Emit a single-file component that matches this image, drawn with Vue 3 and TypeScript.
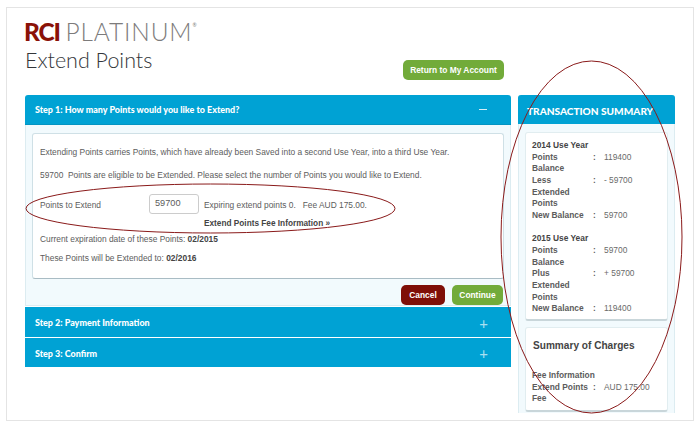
<script setup lang="ts">
interface Row {
  label: string
  value: string
}

const useYears: { title: string; rows: Row[] }[] = [
  {
    title: '2014 Use Year',
    rows: [
      { label: 'Points Balance', value: '119400' },
      { label: 'Less Extended Points', value: '- 59700' },
      { label: 'New Balance', value: '59700' }
    ]
  },
  {
    title: '2015 Use Year',
    rows: [
      { label: 'Points Balance', value: '59700' },
      { label: 'Plus Extended Points', value: '+ 59700' },
      { label: 'New Balance', value: '119400' }
    ]
  }
]
</script>

<template>
  <div class="page">
    <div class="frame">
      <div class="logo"><b>RCI</b><span>PLATINUM</span><sup>®</sup></div>
      <div class="top">
        <h1>Extend Points</h1>
        <a class="btn green back">Return to My Account</a>
      </div>

      <div class="columns">
        <div class="steps">
          <div class="step-head">
            <span>Step 1: How many Points would you like to Extend?</span>
            <i class="minus"></i>
          </div>
          <div class="step-body">
            <div class="card">
              <p class="intro">Extending Points carries Points, which have already been Saved into a second Use Year, into a third Use Year.</p>
              <p class="intro second">59700&nbsp; Points are eligible to be Extended. Please select the number of Points you would like to Extend.</p>
              <div class="extend-row">
                <span class="extend-label">Points to Extend</span>
                <div class="fake-input">59700</div>
                <span>Expiring extend points 0. &nbsp; Fee AUD 175.00.</span>
              </div>
              <a class="fee-link">Extend Points Fee Information »</a>
              <p class="date">Current expiration date of these Points: <b>02/2015</b></p>
              <p class="date next">These Points will be Extended to: <b>02/2016</b></p>
            </div>
            <div class="actions">
              <a class="btn red">Cancel</a>
              <a class="btn green">Continue</a>
            </div>
          </div>
          <div class="step-head closed">
            <span>Step 2: Payment Information</span>
            <em>+</em>
          </div>
          <div class="step-head closed last">
            <span>Step 3: Confirm</span>
            <em>+</em>
          </div>
        </div>

        <div class="side">
          <div class="side-head">TRANSACTION SUMMARY</div>
          <div class="side-body">
            <div class="side-card">
              <div v-for="year in useYears" :key="year.title" class="year">
                <div class="year-title">{{ year.title }}</div>
                <div v-for="row in year.rows" :key="row.label" class="row">
                  <span class="row-label">{{ row.label }}</span>
                  <span class="colon">:</span>
                  <span class="row-value">{{ row.value }}</span>
                </div>
              </div>
            </div>
            <div class="side-card charges">
              <h2>Summary of Charges</h2>
              <div class="year-title fee-title">Fee Information</div>
              <div class="row">
                <span class="row-label">Extend Points Fee</span>
                <span class="colon">:</span>
                <span class="row-value">AUD 175.00</span>
              </div>
            </div>
          </div>
        </div>
      </div>

      <svg class="marks" width="700" height="432" viewBox="0 0 700 432" fill="none">
        <ellipse cx="210.5" cy="208.5" rx="184.5" ry="24.5" />
        <ellipse cx="591.5" cy="237" rx="90.5" ry="176" />
      </svg>
    </div>
  </div>
</template>

<style>
html,
body {
  background: #fff;
}
</style>

<style scoped>
.page {
  width: 700px;
  height: 432px;
  padding: 7px 6px 11px;
  box-sizing: border-box;
  overflow: hidden;
  font-family: 'Liberation Sans', Arial, sans-serif;
  font-size: 8.4px;
  color: #5c5c5c;
}
.frame {
  height: 100%;
  box-sizing: border-box;
  border: 1px solid #e4e4e4;
  padding: 13px 18px 0;
}
.logo {
  height: 21px;
  display: flex;
  align-items: flex-start;
  margin-left: -1px;
  font-family: Lato, 'Liberation Sans', sans-serif;
  font-size: 24.5px;
  line-height: 21px;
  color: #7d7b7b;
}
.logo b {
  color: #8a1208;
  font-weight: 900;
  letter-spacing: -1.2px;
  margin-right: 6px;
}
.logo span {
  font-weight: 300;
  letter-spacing: 0.85px;
}
.logo sup {
  font-size: 5px;
  line-height: 9px;
}
.top {
  height: 53px;
  display: flex;
  justify-content: space-between;
  width: 479px;
}
h1 {
  margin: 5px 0 0;
  font-family: Lato, 'Liberation Sans', sans-serif;
  font-size: 21.5px;
  line-height: 26px;
  font-weight: 300;
  color: #33363a;
}
.btn {
  display: inline-flex;
  align-items: center;
  justify-content: center;
  height: 20px;
  border-radius: 5px;
  font-weight: 700;
  font-size: 8.4px;
  color: #fff;
}
.green {
  background: #72ab3a;
}
.red {
  background: #7f0f08;
  width: 44px;
}
.actions .green {
  width: 51px;
}
.back {
  margin-top: 18px;
  width: 101px;
}
.columns {
  display: grid;
  grid-template-columns: 486px 157px;
  gap: 7px;
  align-items: start;
}
.step-head {
  height: 29px;
  padding: 0 24px 0 10px;
  display: flex;
  align-items: center;
  justify-content: space-between;
  background: #00a2d4;
  border-radius: 3px 3px 0 0;
  border-bottom: 1px solid #0394c2;
  color: #fff;
  font-family: Lato, 'Liberation Sans', sans-serif;
  font-weight: 900;
  font-size: 8.95px;
}
.step-head.closed {
  height: 30px;
  padding-top: 1px;
  box-sizing: border-box;
  border-radius: 0;
  border-bottom: 0;
  margin-top: 1px;
}
.step-head.last {
  height: 29px;
}
.minus {
  width: 8px;
  height: 1px;
  background: #d5eef7;
}
.step-head em {
  font-style: normal;
  font-weight: 400;
  font-size: 15px;
  color: #a9dff1;
  margin-right: -1px;
}
.step-body {
  height: 181px;
  box-sizing: border-box;
  padding: 8px 6px 0;
  background: #f2fafd;
  border: 1px solid #dcecf1;
  border-width: 0 1px 1px;
}
.card {
  height: 146px;
  box-sizing: border-box;
  padding: 12px 7px 0;
  background: #fff;
  border: 1px solid #cfe0e6;
  border-bottom-color: #a9bcc4;
  border-radius: 3px;
}
p {
  margin: 0;
}
.intro {
  line-height: 12px;
}
.intro.second {
  margin-top: 11px;
}
.extend-row {
  margin-top: 12px;
  display: flex;
  align-items: center;
  height: 22px;
}
.extend-row > span {
  padding-top: 2px;
}
.extend-label {
  width: 109px;
}
.fake-input {
  width: 50px;
  height: 20px;
  box-sizing: border-box;
  padding: 0 5px;
  margin-right: 5px;
  border: 1px solid #ccc;
  border-radius: 3px;
  line-height: 17px;
  font-size: 9.2px;
}
.fee-link {
  display: block;
  margin: 3px 0 0 164px;
  font-weight: 700;
  font-size: 8.25px;
  line-height: 12px;
  color: #444;
}
.date {
  margin-top: 3px;
  line-height: 12px;
}
.date.next {
  margin-top: 7px;
}
.date b {
  color: #444;
}
.actions {
  margin: 6px 1px 0 0;
  display: flex;
  justify-content: flex-end;
  gap: 7px;
}
.side {
  height: 318px;
  background: #f2fafd;
  border: 1px solid #dcecf1;
  border-width: 0 1px;
  border-radius: 3px 3px 0 0;
}
.side-head {
  height: 29px;
  margin: 0 -1px;
  padding: 2px 0 0 9px;
  display: flex;
  align-items: center;
  background: #00a2d4;
  border-radius: 3px 3px 0 0;
  box-sizing: border-box;
  color: #fff;
  font-family: Lato, 'Liberation Sans', sans-serif;
  font-weight: 900;
  font-size: 10.1px;
}
.side-body {
  padding: 8px 6px 0;
  display: flex;
  flex-direction: column;
  gap: 6px;
}
.side-card {
  background: #fff;
  border: 1px solid #e1edf0;
  border-bottom: 2px solid #c9d6da;
  border-radius: 3px;
  padding: 7px 6px 4px;
  line-height: 11.67px;
}
.year + .year {
  margin-top: 11.5px;
}
.year-title {
  font-weight: 700;
  color: #444;
}
.row {
  display: grid;
  grid-template-columns: 57px 7px 1fr;
  gap: 2px;
}
.row-label {
  font-weight: 700;
  color: #5c5c5c;
}
.colon {
  font-weight: 700;
  text-align: center;
}
.row-value {
  padding-left: 4px;
  color: #6a6a6a;
}
.charges {
  height: 85px;
  box-sizing: border-box;
  padding-top: 0;
}
h2 {
  margin: 11px 0 17px 1px;
  font-size: 10.1px;
  line-height: 14px;
  color: #444;
}
.fee-title {
  color: #5c5c5c;
}
.marks {
  position: absolute;
  left: 0;
  top: 0;
  pointer-events: none;
}
.marks ellipse {
  stroke: #8a1a1a;
  stroke-width: 1;
}
</style>
